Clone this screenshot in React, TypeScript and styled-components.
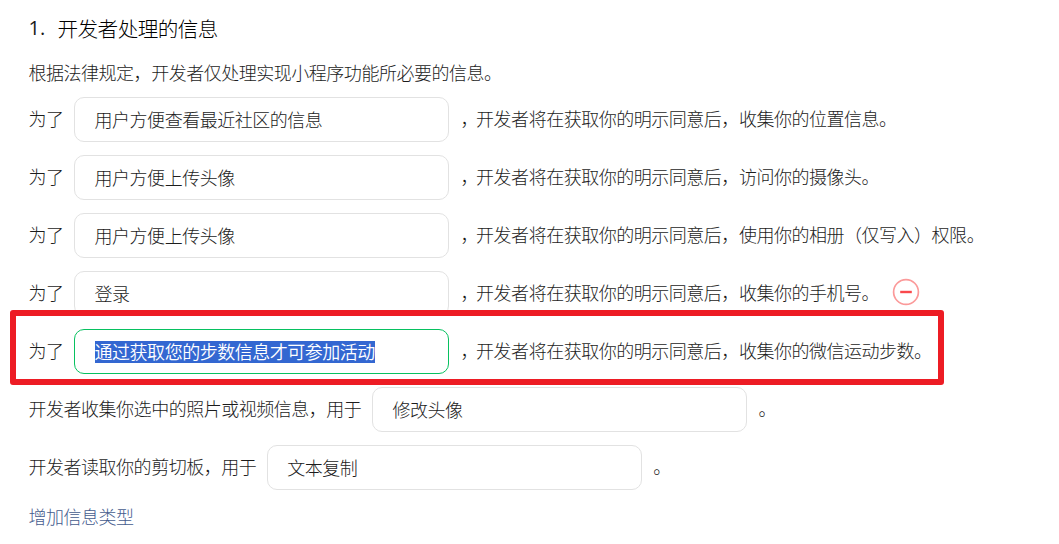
import styled, { createGlobalStyle } from 'styled-components';

type FieldRow = {
  label: string;
  value: string;
  mark: string;
  suffix?: string;
  active?: boolean;
  removable?: boolean;
};

const CONSENT = '开发者将在获取你的明示同意后，';

const rows: FieldRow[] = [
  { label: '为了', value: '用户方便查看最近社区的信息', mark: '，', suffix: `${CONSENT}收集你的位置信息。` },
  { label: '为了', value: '用户方便上传头像', mark: '，', suffix: `${CONSENT}访问你的摄像头。` },
  { label: '为了', value: '用户方便上传头像', mark: '，', suffix: `${CONSENT}使用你的相册（仅写入）权限。` },
  { label: '为了', value: '登录', mark: '，', suffix: `${CONSENT}收集你的手机号。`, removable: true },
  {
    label: '为了',
    value: '通过获取您的步数信息才可参加活动',
    mark: '，',
    suffix: `${CONSENT}收集你的微信运动步数。`,
    active: true,
  },
  { label: '开发者收集你选中的照片或视频信息，用于', value: '修改头像', mark: '。' },
  { label: '开发者读取你的剪切板，用于', value: '文本复制', mark: '。' },
];

const RemoveIcon = () => (
  <svg width="28" height="28" viewBox="0 0 28 28" fill="none">
    <circle cx="14" cy="14" r="12.4" stroke="#fb9a9a" strokeWidth="1.7" />
    <path d="M8.2 14h11.6" stroke="#f9494c" strokeWidth="2.4" />
  </svg>
);

const InfoRow = ({ label, value, mark, suffix, active, removable }: FieldRow) => {
  return (
    <Row>
      {active && <Highlight />}
      <Label>{label}</Label>
      <Field $active={active}>{active ? <Selected>{value}</Selected> : value}</Field>
      <Label>
        <Mark>{mark}</Mark>
        {suffix}
      </Label>
      {removable && (
        <RemoveBtn type="button" aria-label="删除">
          <RemoveIcon />
        </RemoveBtn>
      )}
    </Row>
  );
};

const App = () => {
  return (
    <Page>
      <GlobalStyle />
      <Title>
        <TitleNumber>1.</TitleNumber>
        开发者处理的信息
      </Title>
      <Description>根据法律规定，开发者仅处理实现小程序功能所必要的信息。</Description>
      <RowList>
        {rows.map((row, index) => (
          <InfoRow key={index} {...row} />
        ))}
      </RowList>
      <AddLink>增加信息类型</AddLink>
    </Page>
  );
};

export default App;

const GlobalStyle = createGlobalStyle`
  * {
    box-sizing: border-box;
  }

  body {
    margin: 0;
    background-color: #ffffff;
    overflow: hidden;
  }
`;

const Page = styled.main`
  height: 544px;
  padding: 13px 0 0 28.5px;
  font-family: 'Noto Sans CJK SC', sans-serif;
  font-size: 18px;
  font-weight: 300;
  letter-spacing: -0.48px;
  color: #1c1c1c;
  white-space: nowrap;
`;

const Title = styled.h3`
  display: flex;
  margin: 0;
  font-size: 20.6px;
  font-weight: 300;
  letter-spacing: -0.55px;
  line-height: 30px;
  color: #000000;
`;

const TitleNumber = styled.span`
  width: 29px;
  font-family: 'Open Sans', sans-serif;
  font-size: 20px;
  font-weight: 400;
  letter-spacing: 0;
  color: #1a1a1a;
`;

const Description = styled.p`
  margin: 16px 0 12px;
  line-height: 26px;
`;

const RowList = styled.div`
  display: flex;
  flex-direction: column;
  gap: 13px;
`;

const Row = styled.div`
  position: relative;
  display: flex;
  align-items: center;
  height: 45px;
`;

const Label = styled.span`
  line-height: 26px;
  padding-bottom: 3px;

  &:first-of-type {
    flex-shrink: 0;
  }
`;

const Mark = styled.span`
  padding-left: 2px;
  margin-right: -2px;
`;

const Field = styled.div<{ $active?: boolean }>`
  display: flex;
  align-items: center;
  width: 375px;
  height: 45px;
  margin: 0 9.5px 0 10.5px;
  padding: 0 19.5px 2px;
  border: 1px solid ${({ $active }) => ($active ? '#07c160' : '#e2e2e2')};
  border-radius: 10px;
`;

const Selected = styled.span`
  height: 22px;
  margin-top: 2px;
  line-height: 21px;
  font-weight: 350;
  color: #ffffff;
  background-color: #3367d1;
`;

// red frame drawn around the focused row, over its neighbours
const Highlight = styled.div`
  position: absolute;
  z-index: 1;
  top: -19px;
  left: -18.5px;
  width: 934px;
  height: 75px;
  border: 6px solid #ed1c24;
  border-radius: 3px;
  pointer-events: none;
`;

const RemoveBtn = styled.button`
  display: flex;
  margin: 0 0 0 12.5px;
  padding: 0 0 3px;
  border: none;
  background: none;
`;

const AddLink = styled.a`
  display: block;
  margin-top: 13px;
  line-height: 26px;
  color: #455c8e;
`;
